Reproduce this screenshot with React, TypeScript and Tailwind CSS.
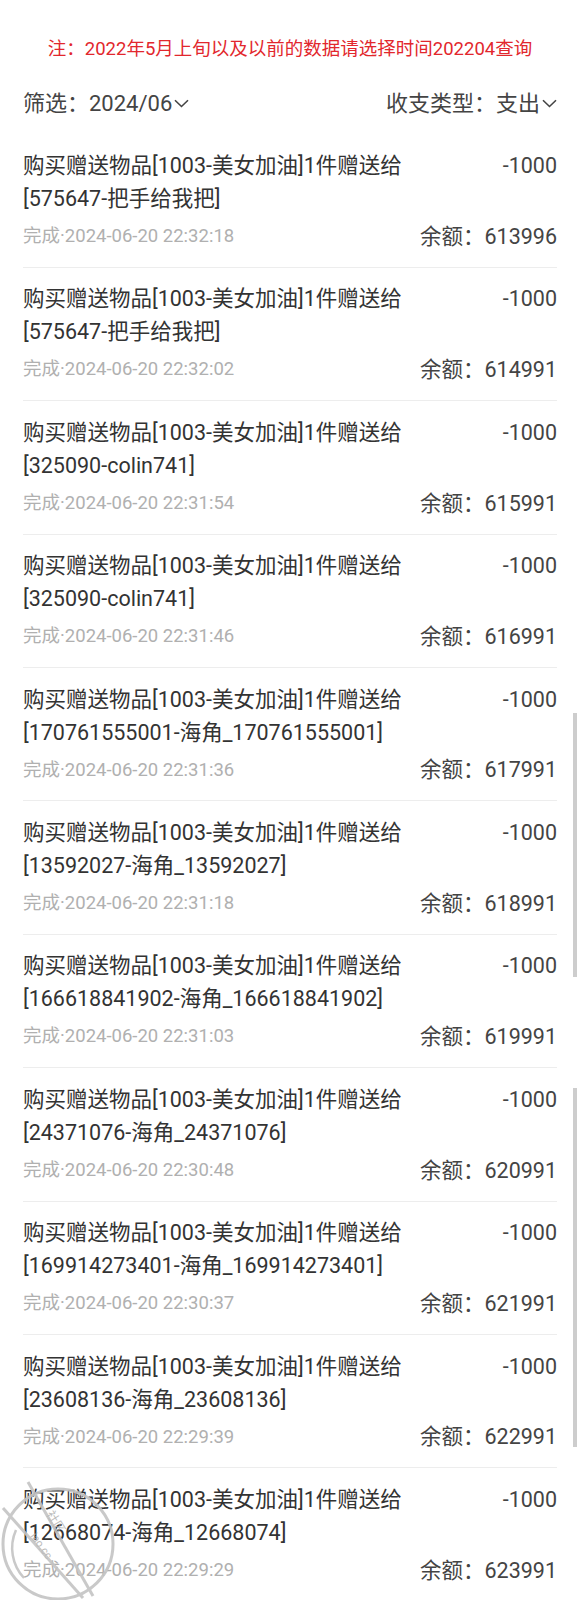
const FONT = "font-['Roboto','Noto_Sans_CJK_SC',sans-serif]";

const RECORDS = [
  { to: "575647-把手给我把", time: "22:32:18", balance: "613996" },
  { to: "575647-把手给我把", time: "22:32:02", balance: "614991" },
  { to: "325090-colin741", time: "22:31:54", balance: "615991" },
  { to: "325090-colin741", time: "22:31:46", balance: "616991" },
  { to: "170761555001-海角_170761555001", time: "22:31:36", balance: "617991" },
  { to: "13592027-海角_13592027", time: "22:31:18", balance: "618991" },
  { to: "166618841902-海角_166618841902", time: "22:31:03", balance: "619991" },
  { to: "24371076-海角_24371076", time: "22:30:48", balance: "620991" },
  { to: "169914273401-海角_169914273401", time: "22:30:37", balance: "621991" },
  { to: "23608136-海角_23608136", time: "22:29:39", balance: "622991" },
  { to: "12668074-海角_12668074", time: "22:29:29", balance: "623991" },
];

function Chevron() {
  return (
    <svg width="15" height="9" viewBox="0 0 15 9" className="ml-[2px] mt-[1px]">
      <path d="M1 1.2 L7.5 7.5 L14 1.2" fill="none" stroke="#444" strokeWidth="1.6" />
    </svg>
  );
}

// faint stamp watermark lying over the last row
function Watermark() {
  return (
    <svg
      width="130"
      height="130"
      viewBox="0 0 130 130"
      className="pointer-events-none absolute left-0 top-[1478px] opacity-90"
    >
      <circle cx="58" cy="66" r="55" fill="none" stroke="#c4c4c4" strokeWidth="3" />
      <path d="M24 100 A44 44 0 0 1 16 52" fill="none" stroke="#c4c4c4" strokeWidth="2.5" />
      <line x1="28" y1="4" x2="93" y2="118" stroke="#c4c4c4" strokeWidth="3" />
      <line x1="3" y1="30" x2="83" y2="120" stroke="#c4c4c4" strokeWidth="3" />
      <text
        x="46"
        y="36"
        fontSize="12"
        fill="#b4b4b4"
        fontFamily="Noto Sans CJK SC, sans-serif"
        transform="rotate(58 46 36)"
      >
        社区
      </text>
      <text
        x="30"
        y="58"
        fontSize="11"
        fill="#b4b4b4"
        fontFamily="Roboto, sans-serif"
        transform="rotate(55 30 58)"
      >
        iao.cc
      </text>
    </svg>
  );
}

export default function App() {
  return (
    <div className={`relative h-[1600px] w-[580px] overflow-hidden bg-white ${FONT}`}>
      <div className="pt-[35px] text-center text-[18.5px] leading-[28px] text-[#e2272d]">
        注：2022年5月上旬以及以前的数据请选择时间202204查询
      </div>

      <div className="mt-[18px] flex h-[44px] items-center justify-between px-[23px] text-[22px] text-[#444]">
        <div className="flex items-center">
          筛选：2024/06
          <Chevron />
        </div>
        <div className="flex items-center">
          收支类型：支出
          <Chevron />
        </div>
      </div>

      <div className="mt-[9.5px] px-[23px]">
        {RECORDS.map((r) => (
          <div key={r.time} className="border-b border-[#ededed] pb-[16px] pt-[14.5px]">
            <div className="flex justify-between text-[21.5px] leading-[33px]">
              <div className="whitespace-nowrap text-[#333]">
                <div>购买赠送物品[1003-美女加油]1件赠送给</div>
                <div>[{r.to}]</div>
              </div>
              <div className="text-[#444]">-1000</div>
            </div>
            <div className="mt-[7.9px] flex h-[28px] items-center justify-between">
              <span className="text-[18.5px] text-[#b0b0b0]">完成·2024-06-20 {r.time}</span>
              <span className="text-[21.5px] text-[#444]">余额：{r.balance}</span>
            </div>
          </div>
        ))}
      </div>

      <div className="absolute left-[573px] top-[713px] h-[264px] w-[4px] bg-[#cdcdcd]" />
      <div className="absolute left-[573px] top-[1088px] h-[359px] w-[4px] bg-[#cdcdcd]" />
      <Watermark />
    </div>
  );
}
